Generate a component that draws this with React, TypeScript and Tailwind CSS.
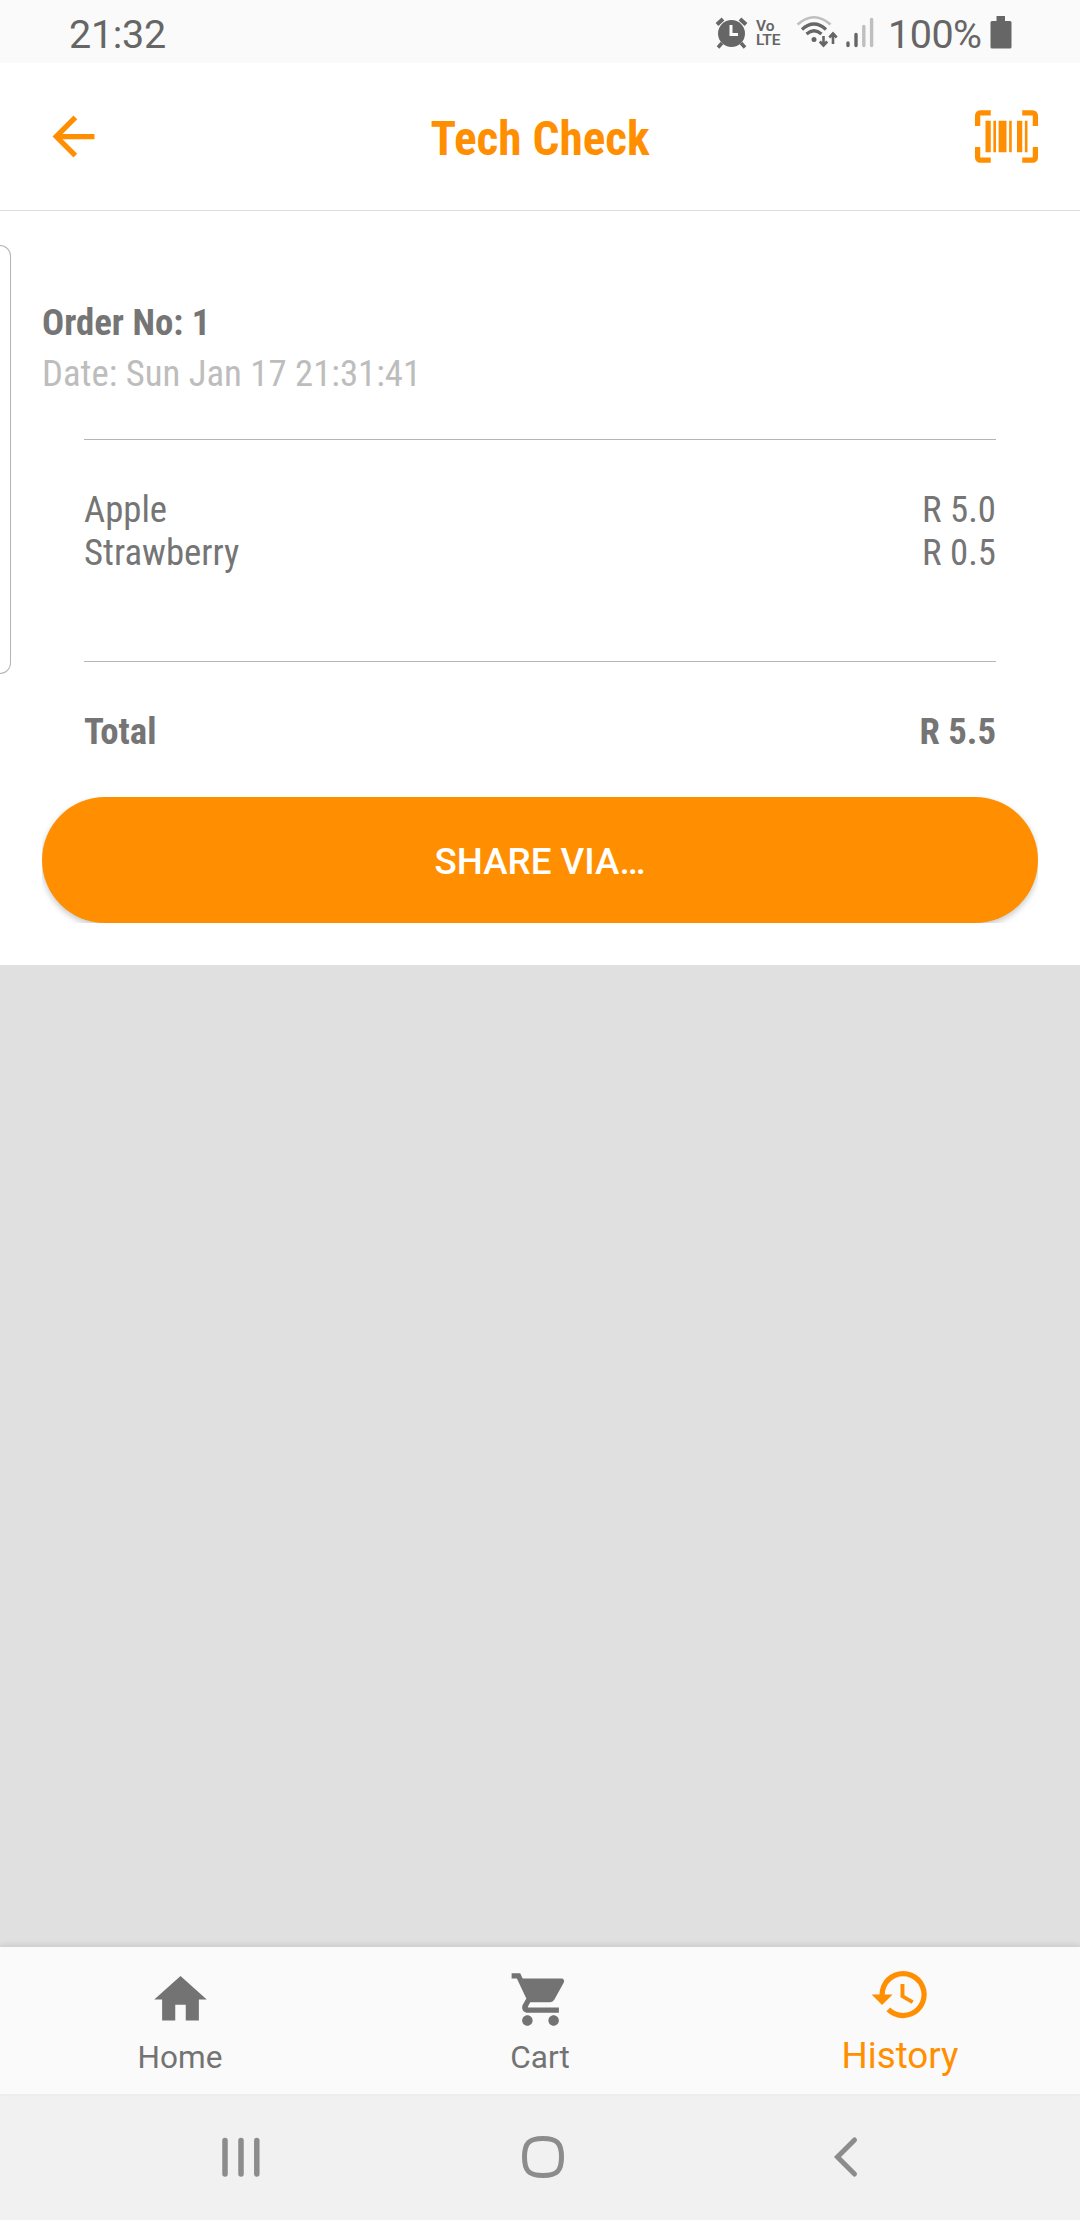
import type { ReactNode } from "react";

const items = [
  { name: "Apple", price: "R 5.0" },
  { name: "Strawberry", price: "R 0.5" },
];

function Icon({ d, className = "" }: { d: string; className?: string }) {
  return (
    <svg viewBox="0 0 24 24" fill="currentColor" className={`size-[63px] shrink-0 ${className}`}>
      <path d={d} />
    </svg>
  );
}

function StatusBar() {
  return (
    <div className="flex h-[63px] items-start bg-[#fafafa] pl-[69px] text-[#666666]">
      <span className="w-[645px] pt-3 text-[39.5px] leading-[46px] tracking-[-0.3px]">21:32</span>
      <svg viewBox="0 0 34 34" className="mt-4 h-[34px] w-[34px]" fill="currentColor">
        <circle cx="17.5" cy="17.5" r="13.5" />
        <path d="M3 8.5 9 3M32 8.5 26 3" stroke="currentColor" strokeWidth="4" />
        <path d="m8 27-4 4.500M27 27l4 4.500" stroke="currentColor" strokeWidth="3.500" />
        <path d="M17 9v9.500h7" fill="none" stroke="#fafafa" strokeWidth="3" />
      </svg>
      <div className="ml-2 flex w-[26px] flex-col pt-[19px] text-[15.5px] font-semibold leading-[14px]">
        <span>Vo</span>
        <span className="tracking-[-0.2px]">LTE</span>
      </div>
      <svg viewBox="0 0 44 34" className="ml-3.5 mt-[15px] h-[34px] w-[44px]" fill="none" stroke="currentColor">
        <path d="M1.500 9.500Q18-5 34.500 9.500" strokeWidth="2.600" opacity=".4" />
        <path d="M6 14.500q12-11 24 0M10.500 19q7.500-6.500 15 0" strokeWidth="3.200" />
        <circle cx="18" cy="24.500" r="2.500" fill="currentColor" stroke="none" />
        <path d="M27.500 21v9M23.800 26.500l3.700 4 3.700-4M37 29V19M33.300 22.500l3.700-4 3.700 4" strokeWidth="2.600" />
      </svg>
      <svg viewBox="0 0 28 32" className="ml-1.5 mt-4 h-8 w-7" fill="none" stroke="currentColor" strokeWidth="3.400" strokeLinecap="round">
        <path d="M2 27v2.500M10 18.500v11" />
        <path d="M17.800 10.500v19M25.600 3.500v26" opacity=".4" />
      </svg>
      <span className="ml-[14px] w-[102px] whitespace-nowrap pt-3 text-[39.5px] leading-[46px] tracking-[-0.5px]">100%</span>
      <svg viewBox="0 0 22 33" className="mt-4 h-[33px] w-[22px]" fill="currentColor">
        <path d="M6.500 0h8.500v5H20a1.500 1.500 0 0 1 1.500 1.500V31a1.500 1.500 0 0 1-1.500 1.500H2A1.500 1.500 0 0 1 .5 31V6.500A1.500 1.500 0 0 1 2 5h4.500z" />
      </svg>
    </div>
  );
}

function Header() {
  return (
    <header className="flex h-[148px] items-start justify-between border-b border-[#dedede] bg-white px-[42px] text-[#ff8f00]">
      <Icon className="mt-[42px]" d="M20 11H7.830l5.590-5.590L12 4l-8 8 8 8 1.410-1.410L7.830 13H20v-2z" />
      <h1 className="mt-12 text-[47.25px] font-bold leading-[56px] [font-stretch:75%]">Tech Check</h1>
      <Icon
        className="mt-[42px]"
        d="M4,6H6V18H4V6M7,6H8V18H7V6M9,6H12V18H9V6M13,6H14V18H13V6M16,6H18V18H16V6M19,6H20V18H19V6M2,4V8H0V4A2,2 0 0,1 2,2H6V4H2M22,2A2,2 0 0,1 24,4V8H22V4H18V2H22M2,16V20H6V22H2A2,2 0 0,1 0,20V16H2M22,20V16H24V20A2,2 0 0,1 22,22H18V20H22Z"
      />
    </header>
  );
}

function Order() {
  return (
    <main className="flex h-[754px] bg-white text-[36.75px] leading-[43px] text-[#757575] [font-stretch:75%]">
      <div className="mt-[34px] h-[429px] w-[11px] shrink-0 rounded-r-[16px] border-y border-r border-[#b5b5b5]" />
      <div className="ml-[31px] mr-[42px] flex grow flex-col pt-[90px]">
        <h2 className="font-bold">Order No: 1</h2>
        <p className="mt-2 text-[#bdbdbd]">Date: Sun Jan 17 21:31:41</p>
        <div className="mx-[42px] mt-[44px] h-[223px] border-y border-[#b5b5b5] pt-12">
          {items.map((item) => (
            <div key={item.name} className="flex justify-between">
              <span>{item.name}</span>
              <span>{item.price}</span>
            </div>
          ))}
        </div>
        <div className="mx-[42px] mt-12 flex justify-between font-bold">
          <span>Total</span>
          <span>R 5.5</span>
        </div>
        <div className="mt-11 overflow-hidden">
          <button className="block h-[126px] w-full rounded-full bg-[#ff8f00] pt-0.5 font-medium text-white shadow-[0_3px_6px_rgba(0,0,0,0.22)] [font-stretch:100%]">
            SHARE VIA…
          </button>
        </div>
      </div>
    </main>
  );
}

function Tab({ icon, children, active = false }: { icon: string; children: ReactNode; active?: boolean }) {
  return (
    <div className={`flex flex-1 flex-col items-center ${active ? "pt-4 text-[#ff8f00]" : "pt-[21px] text-[#737373]"}`}>
      <Icon d={icon} />
      <span className={active ? "mt-2 text-[36.75px] leading-[43px]" : "mt-2 text-[31.5px] leading-[37px]"}>
        {children}
      </span>
    </div>
  );
}

function TabBar() {
  return (
    <nav className="relative flex h-[147px] bg-[#fafafa] shadow-[0_-2px_6px_rgba(0,0,0,0.1)]">
      <Tab icon="M10 20v-6h4v6h5v-8h3L12 3 2 12h3v8z">Home</Tab>
      <Tab icon="M7 18c-1.100 0-1.990.9-1.990 2S5.900 22 7 22s2-.9 2-2-.9-2-2-2zM1 2v2h2l3.600 7.590-1.350 2.450c-.16.28-.25.61-.25.96 0 1.100.9 2 2 2h12v-2H7.420c-.14 0-.25-.11-.25-.25l.03-.12.9-1.630h7.450c.75 0 1.410-.41 1.750-1.030l3.580-6.490A1.003 1.003 0 0 0 20 4H5.210l-.94-2H1zm16 16c-1.100 0-1.990.9-1.990 2s.89 2 1.990 2 2-.9 2-2-.9-2-2-2z">
        Cart
      </Tab>
      <Tab
        active
        icon="M13 3a9 9 0 0 0-9 9H1l3.890 3.890.07.14L9 12H6c0-3.870 3.130-7 7-7s7 3.130 7 7-3.130 7-7 7c-1.930 0-3.680-.79-4.940-2.060l-1.420 1.420A8.954 8.954 0 0 0 13 21a9 9 0 0 0 0-18zm-1 5v5l4.280 2.540.72-1.210-3.500-2.080V8H12z"
      >
        History
      </Tab>
    </nav>
  );
}

function SystemNav() {
  return (
    <div className="flex h-[126px] items-center bg-[#f1f1f1] pl-[219px] text-[#8c8c8c]">
      <svg viewBox="0 0 44 44" className="size-11" fill="none" stroke="currentColor" strokeWidth="5.500" strokeLinecap="round">
        <path d="M6 5.500v33.500M22 5.500v33.500M37.800 5.500v33.500" />
      </svg>
      <svg viewBox="0 0 44 44" className="ml-[258px] size-11" fill="none" stroke="currentColor" strokeWidth="5">
        <path d="M22 3.500C36 3.500 40.500 8 40.500 22S36 40.500 22 40.500 3.500 36 3.500 22 8 3.500 22 3.500z" />
      </svg>
      <svg viewBox="0 0 44 44" className="ml-[258px] size-11" fill="none" stroke="currentColor" strokeWidth="5" strokeLinecap="round">
        <path d="M31.500 5 14.500 22l17 17" />
      </svg>
    </div>
  );
}

export default function App() {
  return (
    <div className="flex h-[2220px] w-[1080px] flex-col overflow-hidden bg-[#e0e0e0] font-['Roboto',sans-serif]">
      <StatusBar />
      <Header />
      <Order />
      <div className="grow" />
      <TabBar />
      <SystemNav />
    </div>
  );
}
